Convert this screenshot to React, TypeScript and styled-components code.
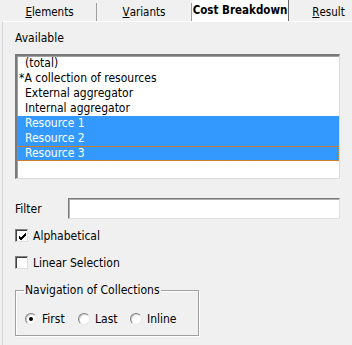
import * as React from "react";
import {FC} from "react";
import styled, {createGlobalStyle} from "styled-components";

const items = [
    {label: "(total)", selected: false},
    {label: "*A collection of resources", selected: false, hang: true},
    {label: "External aggregator", selected: false},
    {label: "Internal aggregator", selected: false},
    {label: "Resource 1", selected: true},
    {label: "Resource 2", selected: true},
    {label: "Resource 3", selected: true, focused: true},
];

const tabs = [
    {key: "E", rest: "lements", width: 94},
    {key: "V", rest: "ariants", width: 95},
    {key: "", rest: "Cost Breakdown", width: 97, active: true},
    {key: "R", rest: "esult", width: 80},
];

const App: FC = () => {
    return (
        <Window>
            <GlobalStyle/>
            <TabBar>
                {tabs.map((t, i) => (
                    <Tab key={i} $active={!!t.active} $width={t.width}>
                        {t.key && <u>{t.key}</u>}{t.rest}
                    </Tab>
                ))}
            </TabBar>
            <Panel>
                <SectionLabel>Available</SectionLabel>
                <ListBox>
                    {items.map((item, i) => (
                        <ListItem key={i} $selected={item.selected} $focused={!!item.focused}
                                  $hang={!!item.hang}>
                            {item.label}
                        </ListItem>
                    ))}
                </ListBox>
                <FilterRow>
                    <span>Filter</span>
                    <TextInput/>
                </FilterRow>
                <CheckRow>
                    <CheckBox>
                        <svg width="9" height="9" viewBox="0 0 9 9">
                            <path d="M1 4 L3 6 L8 1 M1 5 L3 7 L8 2 M1 6 L3 8 L8 3" stroke="#000"
                                  strokeWidth="1" fill="none"/>
                        </svg>
                    </CheckBox>
                    Alphabetical
                </CheckRow>
                <CheckRow $gap={14}>
                    <CheckBox/>
                    Linear Selection
                </CheckRow>
                <GroupBox>
                    <Legend>Navigation of Collections</Legend>
                    <RadioRow>
                        <RadioOption $width={53}><Radio $checked/>First</RadioOption>
                        <RadioOption $width={52}><Radio/>Last</RadioOption>
                        <RadioOption $width={60}><Radio/>Inline</RadioOption>
                    </RadioRow>
                </GroupBox>
            </Panel>
        </Window>
    );
};

export default App;

const GlobalStyle = createGlobalStyle`
  body {
    margin: 0;
    background: #f0f0f0;
  }
`;

const Window = styled.div`
  width: 352px;
  height: 345px;
  overflow: hidden;
  background: #f0f0f0;
  font-family: "DejaVu Sans Condensed", "Liberation Sans", sans-serif;
  font-size: 11px;
  color: #000;
`;

const TabBar = styled.div`
  display: flex;
  align-items: flex-end;
  height: 21px;
  padding-left: 3px;
  box-sizing: border-box;
`;

const Tab = styled.div<{ $active: boolean; $width: number }>`
  flex: 0 0 ${p => p.$width}px;
  box-sizing: border-box;
  height: ${p => p.$active ? 21 : 18}px;
  display: flex;
  align-items: center;
  justify-content: center;
  white-space: nowrap;
  overflow: hidden;
  background: ${p => p.$active ? "#ffffff" : "#f0f0f0"};
  font-weight: ${p => p.$active ? 700 : 400};
  font-size: 11.5px;
  border-right: 1px solid ${p => p.$active ? "#6a6a6a" : "#a0a0a0"};
  box-shadow: ${p => p.$active ? "none" : "1px 0 0 #696969"};
  padding-bottom: ${p => p.$active ? 2 : 0}px;
  position: relative;
  z-index: ${p => p.$active ? 1 : 0};
`;

const Panel = styled.div`
  margin-left: 2px;
  border-left: 1px solid #d8d8d8;
  border-top: 1px solid #ffffff;
  padding: 9px 0 0 12px;
  height: 330px;
  box-sizing: border-box;
  display: flex;
  flex-direction: column;
  align-items: flex-start;
`;

const SectionLabel = styled.div`
  height: 15px;
  line-height: 15px;
  font-size: 12px;
`;

const ListBox = styled.div`
  margin-top: 8px;
  width: 325px;
  height: 125px;
  box-sizing: border-box;
  background: #fff;
  border-top: 2px solid #7a7a7a;
  border-left: 2px solid #7a7a7a;
  border-right: 1px solid #dcdcdc;
  border-bottom: 1px solid #dcdcdc;
  box-shadow: inset 1px 1px 0 #a0a0a0;
`;

const ListItem = styled.div<{ $selected: boolean; $focused: boolean; $hang: boolean }>`
  position: relative;
  height: 15px;
  line-height: 15px;
  font-size: 12px;
  padding-left: ${p => p.$hang ? 2 : 8}px;
  background: ${p => p.$selected ? "#3399ff" : "transparent"};
  color: ${p => p.$selected ? "#ffffff" : "#000000"};
  white-space: nowrap;

  &::after {
    content: "";
    display: ${p => p.$focused ? "block" : "none"};
    position: absolute;
    inset: 0;
    border: 1px dotted #d4802f;
  }
`;

const FilterRow = styled.div`
  margin-top: 19px;
  display: flex;
  align-items: center;
  font-size: 12px;

  span {
    width: 53px;
  }
`;

const TextInput = styled.div`
  width: 272px;
  height: 21px;
  box-sizing: border-box;
  background: #fff;
  border-top: 1px solid #7a7a7a;
  border-left: 1px solid #7a7a7a;
  border-right: 1px solid #e0e0e0;
  border-bottom: 1px solid #e0e0e0;
  box-shadow: inset 1px 1px 0 #b0b0b0;
`;

const CheckRow = styled.div<{ $gap?: number }>`
  margin-top: ${p => p.$gap ?? 10}px;
  display: flex;
  align-items: center;
  gap: 5px;
  font-size: 12px;
  height: 13px;
`;

const CheckBox = styled.div`
  width: 13px;
  height: 13px;
  box-sizing: border-box;
  background: #fff;
  border-top: 1px solid #808080;
  border-left: 1px solid #808080;
  border-right: 1px solid #e0e0e0;
  border-bottom: 1px solid #e0e0e0;
  box-shadow: inset 1px 1px 0 #404040;
  display: flex;
  align-items: center;
  justify-content: center;
  padding: 1px 0 0 1px;
`;

const GroupBox = styled.fieldset`
  margin: 14px 0 0 0;
  min-inline-size: 0;
  width: 184px;
  height: 53px;
  box-sizing: border-box;
  border: 1px solid #a0a0a0;
  box-shadow: 1px 1px 0 #fff, inset 1px 1px 0 #fff;
  padding: 0;
`;

const Legend = styled.legend`
  padding: 0 1px;
  margin-left: 8px;
  font-size: 12px;
  line-height: 14px;
`;

const RadioRow = styled.div`
  display: flex;
  align-items: center;
  margin-top: 15px;
  padding-left: 9px;
  font-size: 12px;
`;

const RadioOption = styled.div<{ $width: number }>`
  width: ${p => p.$width}px;
  display: flex;
  align-items: center;
  gap: 5px;
`;

const Radio = styled.div<{ $checked?: boolean }>`
  width: 12px;
  height: 12px;
  border-radius: 50%;
  box-sizing: border-box;
  background: #fff;
  border: 1px solid;
  border-color: #808080 #e8e8e8 #e8e8e8 #808080;
  box-shadow: inset 1px 1px 0 #d0d0d0;
  display: flex;
  align-items: center;
  justify-content: center;

  &::after {
    content: "";
    display: ${p => p.$checked ? "block" : "none"};
    width: 4px;
    height: 4px;
    border-radius: 50%;
    background: #000;
  }
`;
